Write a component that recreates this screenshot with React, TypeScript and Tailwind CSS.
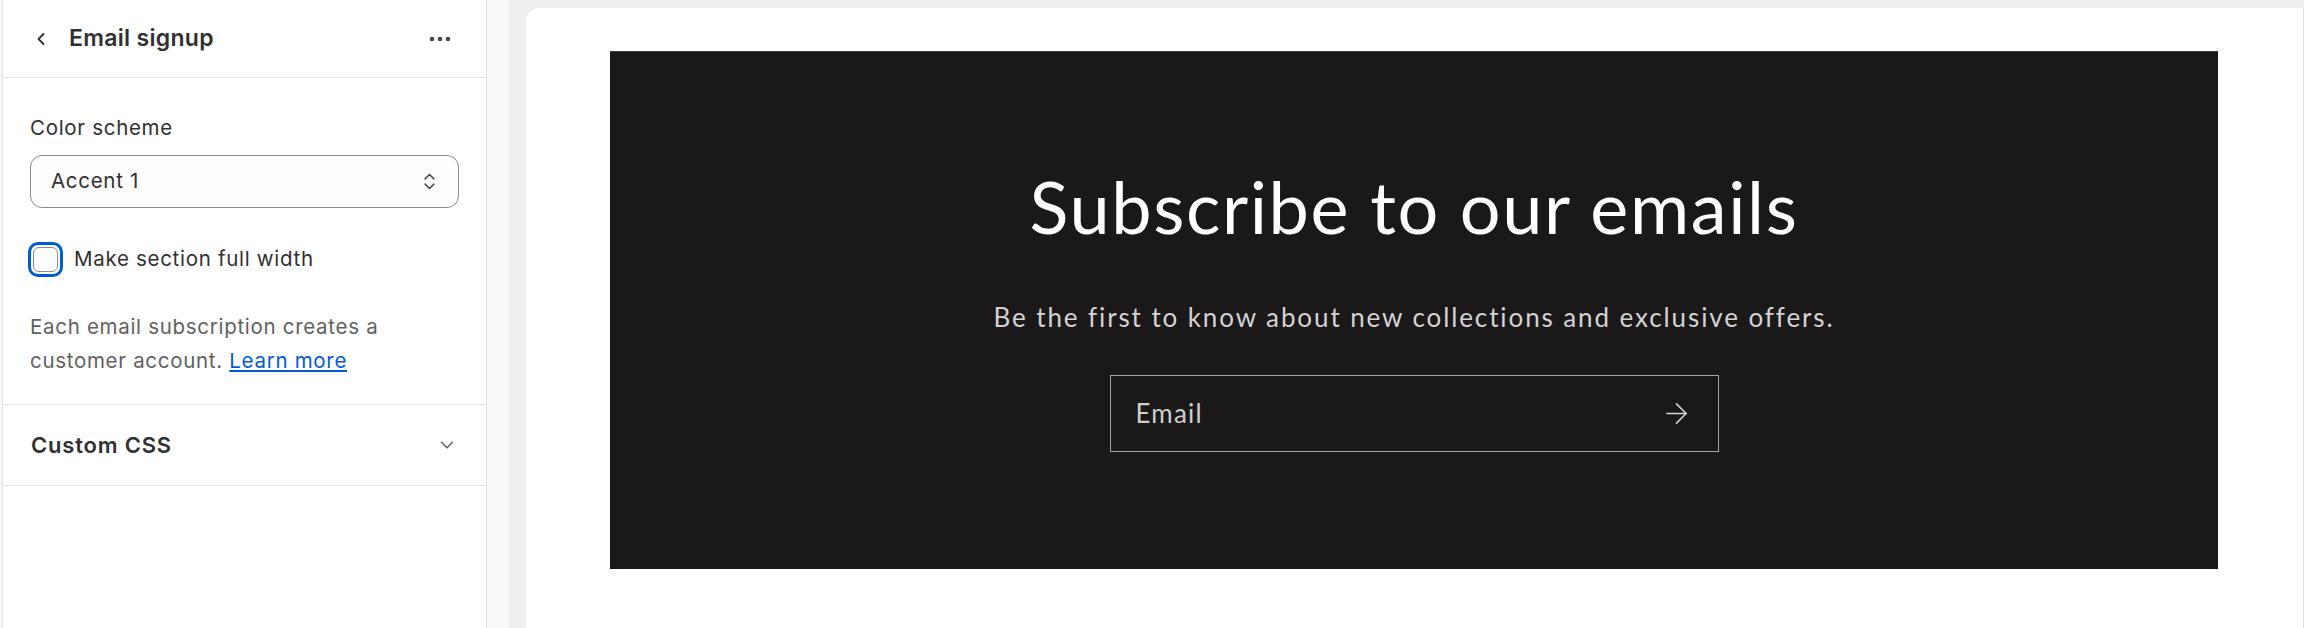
import { ChevronLeft, ChevronDown, ChevronsUpDown, ArrowRight } from 'lucide-react'

function Dots() {
  return (
    <svg width="24" height="8" viewBox="0 0 24 8" fill="#4a4a4a">
      <circle cx="4" cy="4" r="2.3" />
      <circle cx="12" cy="4" r="2.3" />
      <circle cx="20" cy="4" r="2.3" />
    </svg>
  )
}

function SettingsPanel() {
  return (
    <div className="flex h-full w-[485px] shrink-0 flex-col border-x border-[#e3e3e3] bg-white font-['Inter',sans-serif] text-[#303030]">
      {/* Header */}
      <div className="flex h-[78px] items-center border-b border-[#e3e3e3] pl-[28px] pr-[34px]">
        <ChevronLeft size={20} strokeWidth={2.2} className="text-[#303030]" />
        <span className="ml-[18px] text-[23px] font-semibold tracking-[0.3px]">Email signup</span>
        <div className="ml-auto">
          <Dots />
        </div>
      </div>

      {/* Settings */}
      <div className="flex flex-col px-[27px] pt-[36px] pb-[26px] text-[20.5px] tracking-[0.7px]">
        <label className="leading-[28px]">Color scheme</label>
        <div className="mt-[13px] flex h-[53px] items-center justify-between rounded-[12px] border border-[#8a8a8a] bg-[#fdfdfd] pl-[20px] pr-[18px]">
          <span>Accent 1</span>
          <ChevronsUpDown size={21} strokeWidth={1.8} className="text-[#4a4a4a]" />
        </div>

        <div className="mt-[34px] -ml-[2px] flex items-center">
          <div className="flex h-[35px] w-[35px] items-center justify-center rounded-[10px] border-[3px] border-[#005bd3]">
            <div className="h-[25px] w-[25px] rounded-[6px] border border-[#8a8a8a] bg-[#fdfdfd]" />
          </div>
          <span className="ml-[11px]">Make section full width</span>
        </div>

        <p className="mt-[33px] leading-[34px] text-[#616161]">
          Each email subscription creates a customer account.{' '}
          <a className="text-[#005bd3] underline">Learn more</a>
        </p>
      </div>

      {/* Custom CSS */}
      <div className="flex h-[82px] items-center justify-between border-y border-[#e3e3e3] pl-[28px] pr-[28px]">
        <span className="text-[22px] font-semibold tracking-[0.8px]">Custom CSS</span>
        <ChevronDown size={22} strokeWidth={1.8} className="text-[#6b6b6b]" />
      </div>
    </div>
  )
}

function Newsletter() {
  return (
    <div className="flex h-[518px] flex-col items-center border-t border-[#3a3a3a] bg-[#1a1819] pt-[118px]">
      <h1 className="font-['Lato',sans-serif] text-[72px] leading-none tracking-[1.6px] text-white">
        Subscribe to our emails
      </h1>
      <p className="mt-[62px] font-['Lato',sans-serif] text-[26px] leading-none tracking-[1.9px] text-[#d3d3d3]">
        Be the first to know about new collections and exclusive offers.
      </p>
      <div className="mt-[45px] flex h-[77px] w-[609px] items-center justify-between border border-[#a3a3a3] pl-[25px] pr-[25px]">
        <span className="font-['Lato',sans-serif] text-[26px] tracking-[1.2px] text-[#cfcfcf]">Email</span>
        <ArrowRight size={33} strokeWidth={1.1} className="text-[#d8d8d8]" />
      </div>
    </div>
  )
}

export default function App() {
  return (
    <div className="flex h-[628px] w-[2304px] overflow-hidden bg-[#f7f7f7] pl-[2px]">
      <SettingsPanel />
      <div className="w-[22px] shrink-0 bg-[#f9f9f9]" />
      <div className="flex flex-1 bg-[#efefef] pt-[8px] pl-[17px]">
        <div className="flex-1 rounded-tl-[14px] border-r border-[#e0e0e0] bg-white pt-[43px] pl-[84px] pr-[85px]">
          <Newsletter />
        </div>
      </div>
    </div>
  )
}
